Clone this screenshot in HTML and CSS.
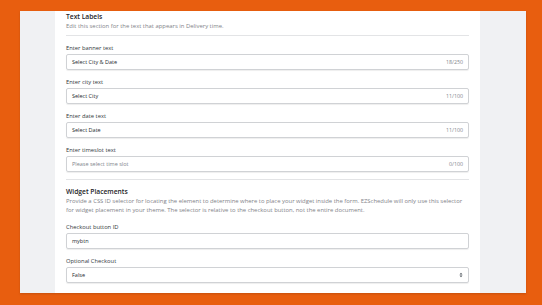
FILE: index.html
```html
<!DOCTYPE html>
<html>
<head>
<meta charset="utf-8">
<link rel="stylesheet" href="styles.css">
</head>
<body>
<div class="window">
  <div class="side side-left"></div>
  <main class="content">
    <h2 class="title">Text Labels</h2>
    <p class="desc">Edit this section for the text that appears in Delivery time.</p>
    <hr class="divider">
    <div class="fields">
      <div class="field">
        <div class="label">Enter banner text</div>
        <div class="input"><span class="value">Select City &amp; Date</span><span class="count">18/250</span></div>
      </div>
      <div class="field">
        <div class="label">Enter city text</div>
        <div class="input"><span class="value">Select City</span><span class="count">11/100</span></div>
      </div>
      <div class="field">
        <div class="label">Enter date text</div>
        <div class="input"><span class="value">Select Date</span><span class="count">11/100</span></div>
      </div>
      <div class="field">
        <div class="label">Enter timeslot text</div>
        <div class="input"><span class="value placeholder">Please select time slot</span><span class="count">0/100</span></div>
      </div>
    </div>
    <hr class="divider divider-2">
    <h2 class="title">Widget Placements</h2>
    <p class="desc desc-2">Provide a CSS ID selector for locating the element to determine where to place your widget inside the form. EZSchedule will only use this selector for widget placement in your theme. The selector is relative to the checkout button, not the entire document.</p>
    <div class="fields">
      <div class="field">
        <div class="label">Checkout button ID</div>
        <div class="input"><span class="value">mybtn</span></div>
      </div>
      <div class="field">
        <div class="label">Optional Checkout</div>
        <div class="input select"><span class="value">False</span>
          <svg class="arrows" width="4" height="6" viewBox="0 0 4 6"><path d="M0.5 2.4 L2 0.8 L3.5 2.4 Z M0.5 3.6 L2 5.2 L3.5 3.6 Z" fill="#50575e"/></svg>
        </div>
      </div>
    </div>
  </main>
  <div class="side side-right"></div>
</div>
</body>
</html>
```
FILE: styles.css
```css
* { box-sizing: border-box; }
html, body { margin: 0; padding: 0; }
body {
  width: 542px;
  height: 305px;
  background: #e85e0f;
  font-family: "Open Sans", "Noto Sans", sans-serif;
  overflow: hidden;
  padding: 11px 16px 0 20px;
}
.window {
  display: flex;
  width: 506px;
  height: 282px;
  background: #fff;
  box-shadow: 0 1px 2px rgba(0,0,0,0.15);
}
.side { background: #f0f1f3; }
.side-left { width: 35px; }
.side-right { width: 46px; }
.content {
  flex: 1;
  padding: 1px 11px 0 11px;
  display: flex;
  flex-direction: column;
}
.title {
  margin: 0;
  font-size: 6.7px;
  line-height: 10px;
  font-weight: 600;
  color: #1d2327;
}
.desc {
  margin: 0;
  font-size: 5.9px;
  line-height: 9px;
  color: #7f8389;
}
.divider {
  border: 0;
  height: 1px;
  background: #e3e4e6;
  margin: 4px 0 7px;
}
.divider-2 { margin-top: 7px; }
.fields {
  display: flex;
  flex-direction: column;
  gap: 7px;
}
.desc-2 { margin-bottom: 7px; }
.field {
  display: flex;
  flex-direction: column;
  gap: 1px;
}
.label {
  font-size: 5.8px;
  line-height: 10px;
  color: #32373c;
}
.input {
  height: 16px;
  border: 1px solid #d0d2d5;
  border-radius: 2px;
  box-shadow: 0 1px 1px rgba(0,0,0,0.07);
  display: flex;
  align-items: center;
  justify-content: space-between;
  padding: 0 5px;
  font-size: 5.5px;
  color: #262b30;
}
.placeholder { color: #82868c; }
.count { color: #82868c; font-size: 5.3px; }
.arrows { display: block; }
```
